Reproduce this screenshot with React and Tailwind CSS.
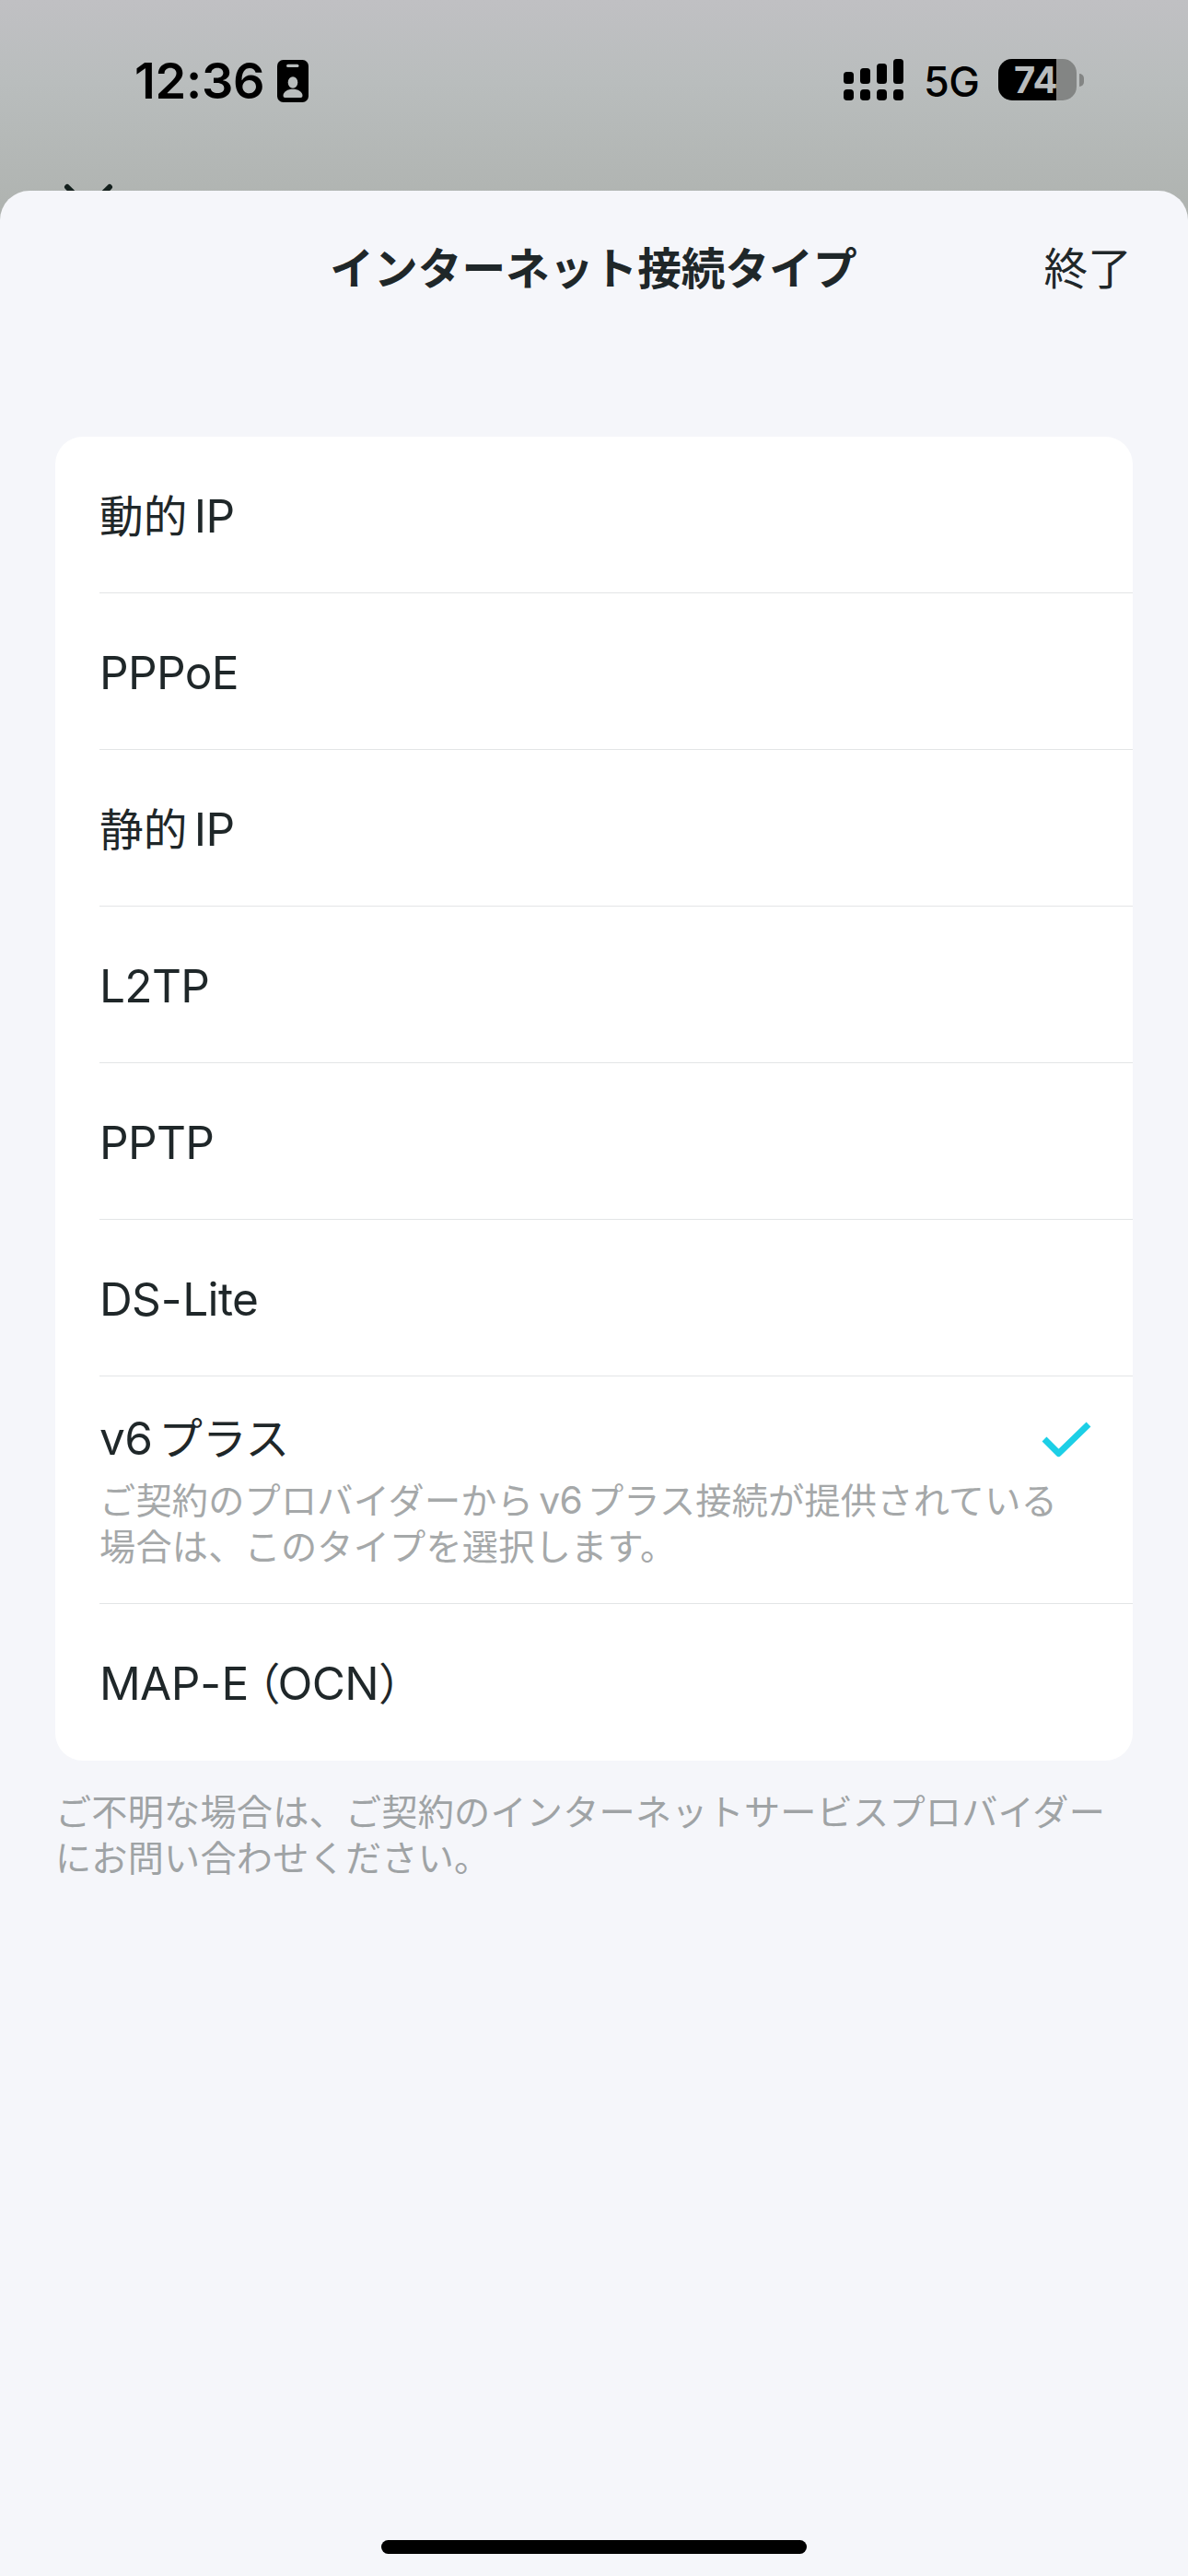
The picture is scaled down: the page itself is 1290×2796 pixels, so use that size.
const options = [
  { label: '動的IP' },
  { label: 'PPPoE' },
  { label: '静的IP' },
  { label: 'L2TP' },
  { label: 'PPTP' },
  { label: 'DS-Lite' },
  {
    label: 'v6プラス',
    lines: ['ご契約のプロバイダーからv6プラス接続が提供されている', '場合は、このタイプを選択します。'],
    selected: true,
  },
  { label: 'MAP-E（OCN）' },
];

// Latin runs are set in Inter, slightly larger than the Japanese around them
const Mixed = ({ text }) => {
  const runs = text.match(/-|[\x20-\x2c\x2e-\x7e]+|[（）]|[^\x20-\x7e（）]+/g);
  const isLatin = (run) => /^[\x20-\x7e]/.test(run);
  return runs.map((run, i) => {
    if (run === '-') return <span key={i} className="font-['Inter',sans-serif] text-[1.04em] leading-none mx-[0.012em]">-</span>;
    if (run === '（') return <span key={i} className="-ml-[13px] -mr-[3px]">{run}</span>;
    if (!isLatin(run)) return <span key={i}>{run}</span>;
    const before = i > 0 && !/[-（]/.test(runs[i - 1]);
    const after = i < runs.length - 1 && !/[-（）]/.test(runs[i + 1]);
    return (
      <span
        key={i}
        className={`font-['Inter',sans-serif] text-[1.04em] leading-none tracking-[-0.014em] ${before ? 'ml-[0.15em]' : ''} ${after ? 'mr-[0.14em]' : ''}`}
      >
        {run}
      </span>
    );
  });
};

const CheckMark = () => (
  <svg className="w-[54px] h-[40px] mt-[7px]" viewBox="0 0 54 40" fill="none">
    <path d="M3 19 L18.5 34.5 L51 3" stroke="#1ccfe6" strokeWidth="7" strokeLinejoin="round" />
  </svg>
);

const BadgeIcon = () => (
  <svg className="w-[34px] h-[46px]" viewBox="0 0 34 46">
    <rect width="34" height="46" rx="6.5" fill="#000" />
    <rect x="10" y="4.7" width="13.5" height="3.4" rx="1.7" fill="#b9bdbd" />
    <ellipse cx="17" cy="24.5" rx="5.3" ry="6.2" fill="#b9bdbd" />
    <path d="M6.5 39 C6.5 34.500 11.500 31.800 17 31.800 C22.500 31.800 27.500 34.500 27.500 39 Q27.500 41 25.500 41 H8.500 Q6.500 41 6.500 39 Z" fill="#b9bdbd" />
  </svg>
);

const SignalIcon = () => (
  <svg className="w-[65px] h-[45px]" viewBox="0 0 65 45">
    <rect x="0" y="14" width="11" height="13" rx="3.5" />
    <rect x="18" y="10" width="11" height="17" rx="3.5" />
    <rect x="36" y="5" width="11" height="22" rx="3.5" />
    <rect x="54" y="0" width="11" height="27" rx="3.5" />
    {[0, 18, 36, 54].map((x) => (
      <rect key={x} x={x} y="33" width="11" height="12" rx="3.8" />
    ))}
  </svg>
);

const Battery = () => (
  <div className="flex items-center gap-[3px]">
    <div className="relative w-[85px] h-[45px] rounded-[15px] bg-[#838584]">
      <div className="w-[63px] h-full rounded-l-[15px] bg-black" />
      <span className="absolute left-[17px] top-0 leading-[45px] text-[40px] font-bold tracking-[-0.01em] text-[#b9bcbd]">74</span>
    </div>
    <div className="w-[5px] h-[14px] rounded-r-full bg-[#838584]" />
  </div>
);

const StatusBar = () => (
  <div className="flex h-[176px] items-start font-['Inter',sans-serif] text-black">
    <div className="flex items-center mt-[64px] ml-[146px] h-[48px]">
      <span className="w-[155px] text-[54px] leading-[48px] font-semibold tracking-[-0.005em]">12:36</span>
      <BadgeIcon />
    </div>
    <div className="flex items-center mt-[64px] ml-auto mr-[113px] h-[45px]">
      <SignalIcon />
      <span className="w-[81px] ml-[22px] text-[45px] leading-[50px] font-[450] tracking-[-0.01em] pt-[5px]">5G</span>
      <Battery />
    </div>
  </div>
);

const OptionRow = ({ option, last }) => (
  <li className="pl-[48px]">
    <div className={`${option.lines ? 'h-[247px] pt-[28px]' : 'h-[170px] pt-[47px]'} ${last ? '' : 'border-b border-[#e3e5e6]'}`}>
      <div className="flex items-center justify-between h-[74px] pr-[45px]">
        <span className="text-[47.7px] leading-[72px] whitespace-nowrap"><Mixed text={option.label} /></span>
        {option.selected && <CheckMark />}
      </div>
      {option.lines && (
        <p className="mt-[5px] text-[39.2px] leading-[50px] tracking-[0.2px] text-[#a5a8a9] whitespace-nowrap">
          {option.lines.map((line) => (
            <span key={line} className="block"><Mixed text={line} /></span>
          ))}
        </p>
      )}
    </div>
  </li>
);

export default function App() {
  return (
    <div className="flex flex-col w-[1290px] h-[2796px] overflow-hidden bg-linear-to-b from-[#c0c0c3] from-0% via-[#b9bdbd] via-[90px] to-[#afb3b0] to-[230px] font-['Noto_Sans_CJK_JP',sans-serif] text-[#1f2729]">
      <StatusBar />

      {/* Close button of the page under the sheet */}
      <div className="h-[31px] pl-[66px] pt-[21px] overflow-hidden">
        <svg className="w-[60px] h-[60px]" viewBox="0 0 60 60" stroke="#14201d" strokeWidth="6" strokeLinecap="round">
          <path d="M7 6 L53 52 M53 6 L7 52" />
        </svg>
      </div>

      <main className="flex flex-col flex-1 rounded-t-[32px] bg-[#f5f6fa]">
        <header className="grid grid-cols-[1fr_auto_1fr] items-center h-[164px] pl-[60px] pr-[61px]">
          <h1 className="col-start-2 text-[47.7px] font-bold">インターネット接続タイプ</h1>
          <button className="justify-self-end text-[47.7px]">終了</button>
        </header>

        <ul className="mt-[103px] mx-[60px] rounded-[30px] bg-white">
          {options.map((option, i) => (
            <OptionRow key={option.label} option={option} last={i === options.length - 1} />
          ))}
        </ul>

        <p className="mt-[28px] ml-[60px] text-[39.2px] leading-[50px] tracking-[0.18px] text-[#9fa3a5] whitespace-nowrap">
          ご不明な場合は、ご契約のインターネットサービスプロバイダー
          <br />
          にお問い合わせください。
        </p>

        <div className="self-center mt-auto mb-[24px] w-[462px] h-[15px] rounded-full bg-black" />
      </main>
    </div>
  );
}
